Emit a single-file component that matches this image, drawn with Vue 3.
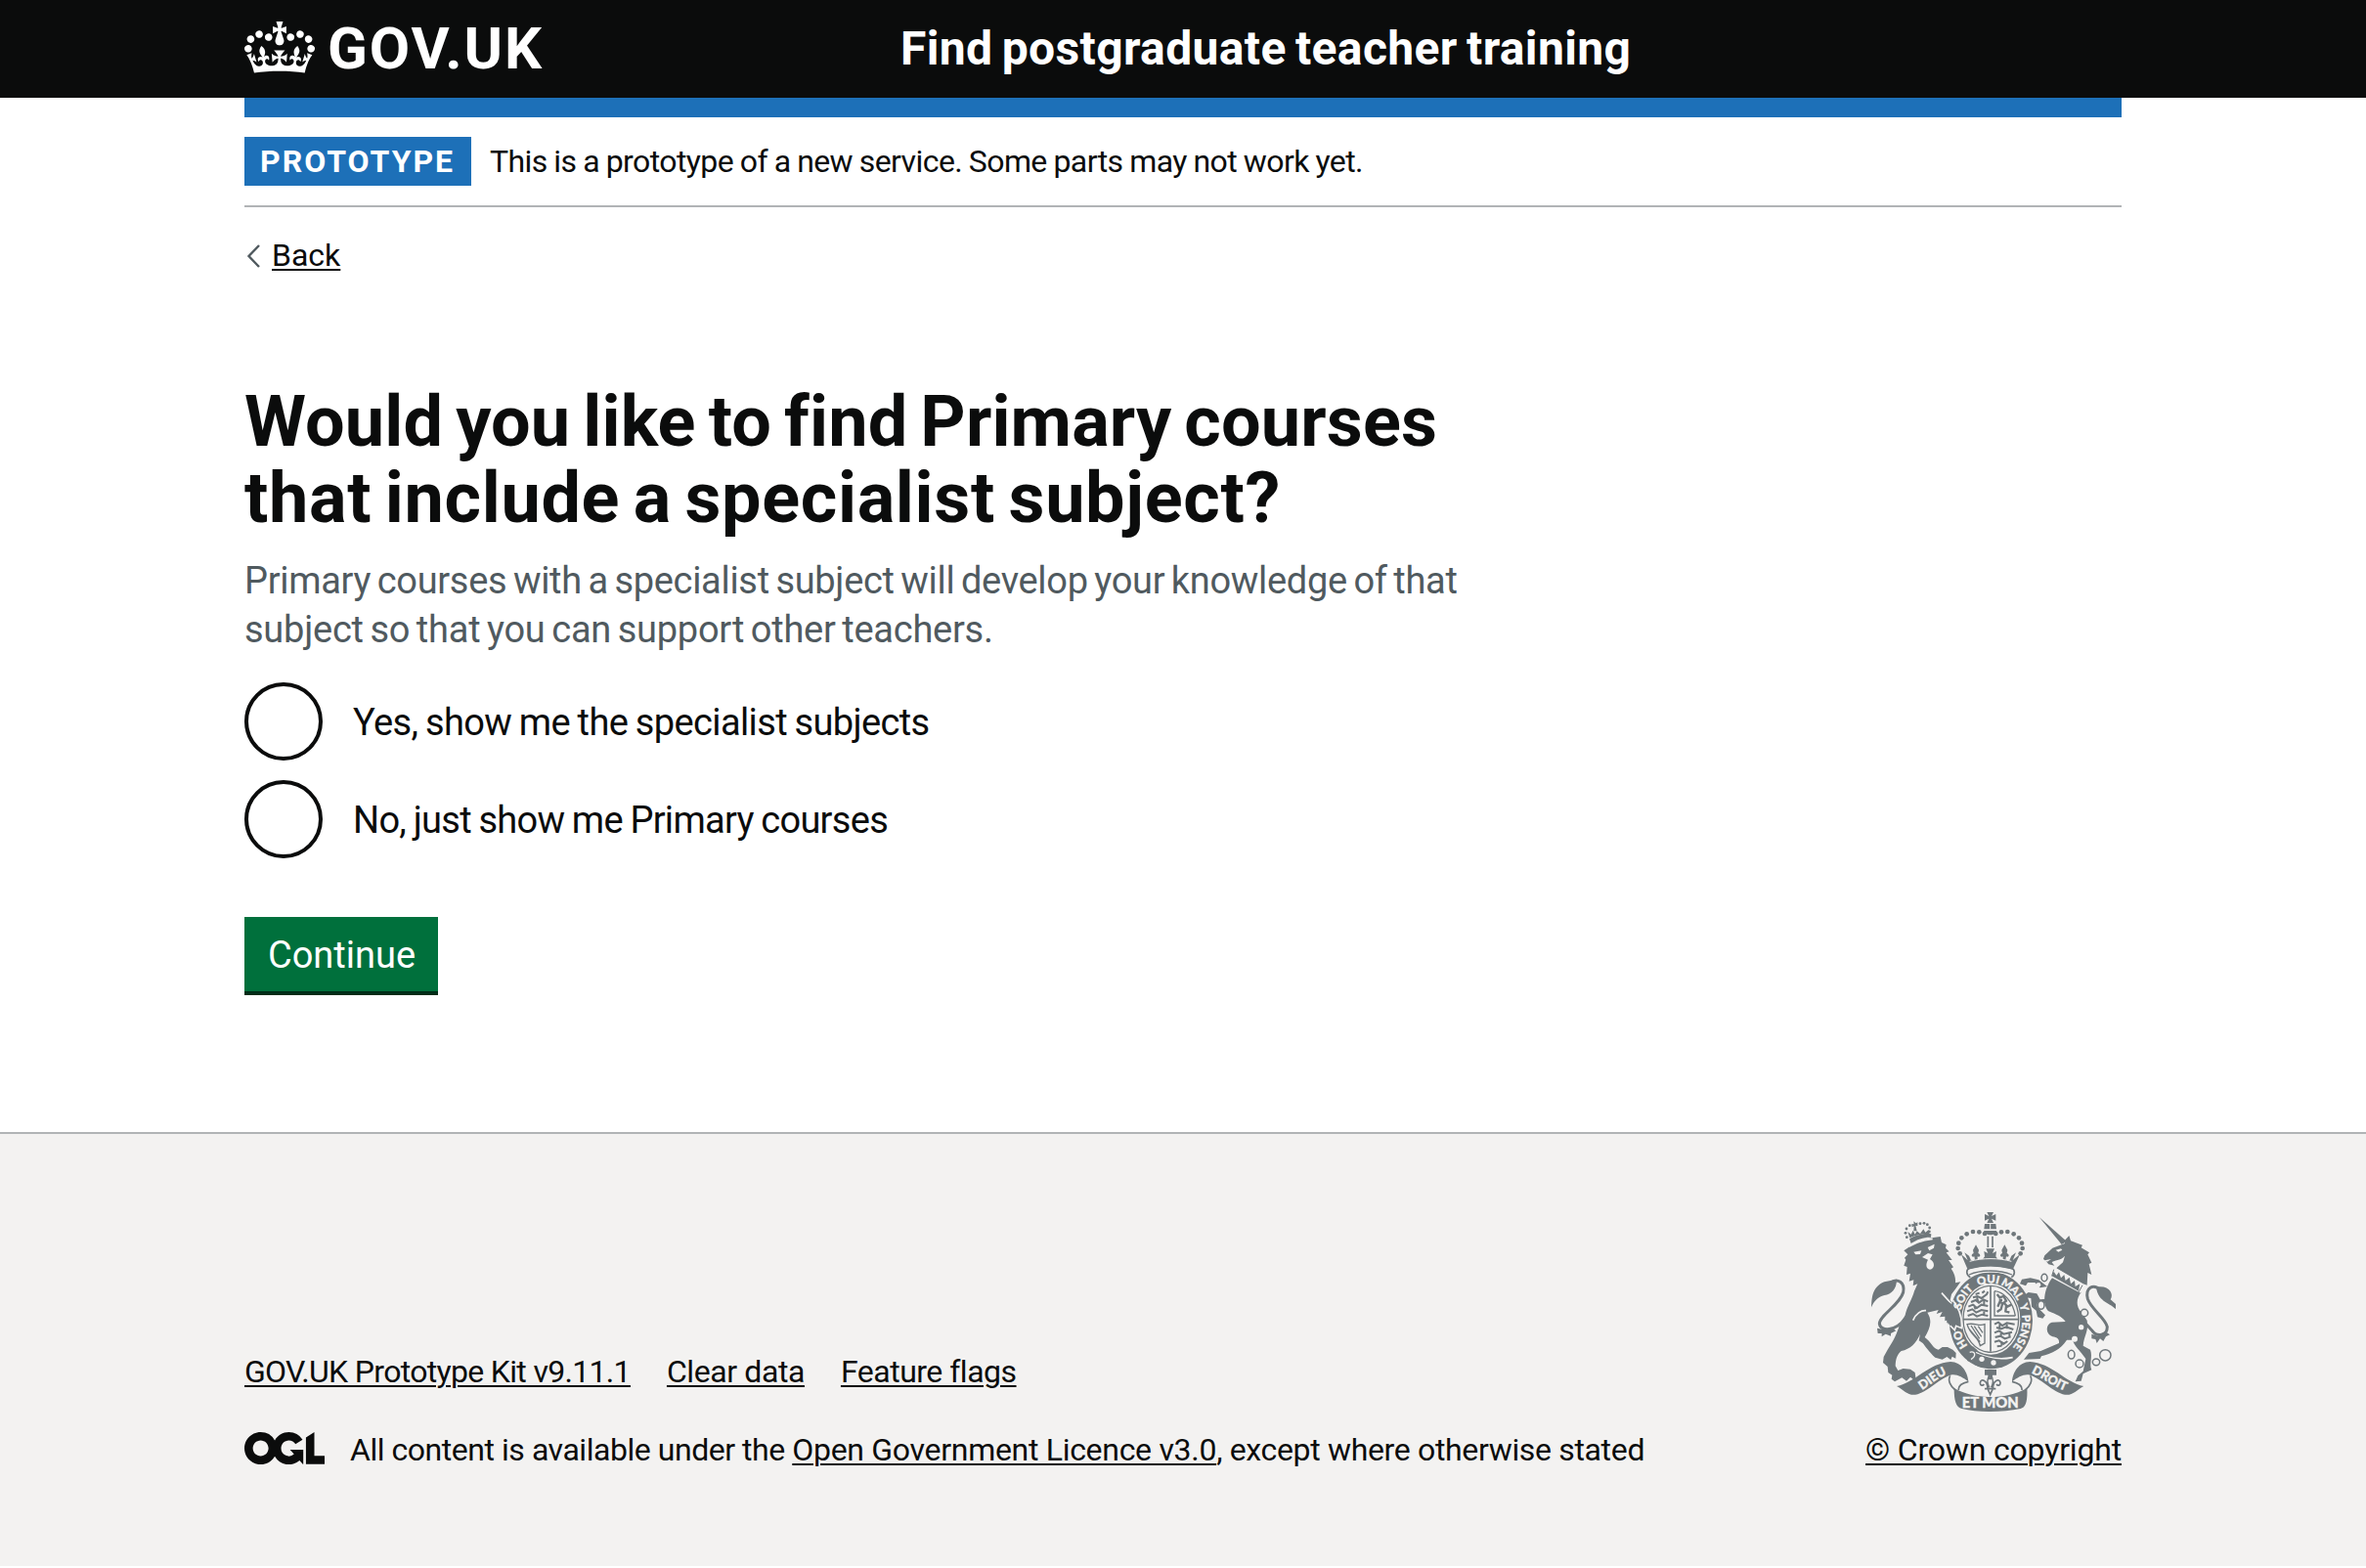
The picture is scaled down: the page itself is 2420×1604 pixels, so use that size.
<script setup>
const options = [
  { id: 'yes', label: 'Yes, show me the specialist subjects' },
  { id: 'no', label: 'No, just show me Primary courses' },
]
const footerLinks = [
  { id: 'kit', label: 'GOV.UK Prototype Kit v9.11.1' },
  { id: 'clear', label: 'Clear data' },
  { id: 'flags', label: 'Feature flags' },
]
const crownBeads = [[420, 126], [403, 121], [384, 120], [365, 127], [349, 139], [340, 155], [338, 171], [344, 187]]
const lionBeads = [[190, 101], [180, 111], [177, 124], [181, 137], [222, 95], [234, 94], [244, 98], [251, 108], [250, 120]]
</script>

<template>
  <header class="header">
    <div class="container header-row">
      <a class="logo">
        <svg class="crown" viewBox="0 0 132 97" aria-hidden="true">
          <path fill="currentColor" d="M25 30.2c3.5 1.5 7.7-.2 9.1-3.7 1.5-3.6-.2-7.8-3.9-9.2-3.6-1.4-7.6.3-9.1 3.9-1.4 3.5.3 7.5 3.9 9zM9 39.5c3.6 1.5 7.8-.2 9.2-3.7 1.5-3.6-.2-7.8-3.9-9.1-3.6-1.5-7.6.2-9.1 3.8-1.4 3.5.3 7.5 3.8 9zM4.4 57.2c3.5 1.5 7.7-.2 9.1-3.8 1.5-3.6-.2-7.7-3.9-9.1-3.5-1.5-7.6.3-9.1 3.8-1.4 3.5.3 7.6 3.9 9.1zm38.3-21.4c3.5 1.5 7.7-.2 9.1-3.8 1.5-3.6-.2-7.7-3.9-9.1-3.6-1.5-7.6.3-9.1 3.8-1.3 3.6.4 7.7 3.9 9.1zm64.4-5.6c-3.6 1.5-7.8-.2-9.1-3.7-1.5-3.6.2-7.8 3.8-9.2 3.6-1.4 7.7.3 9.2 3.9 1.3 3.5-.4 7.5-3.9 9zm15.9 9.3c-3.6 1.5-7.7-.2-9.1-3.7-1.5-3.6.2-7.8 3.7-9.1 3.6-1.5 7.7.2 9.2 3.8 1.5 3.5-.3 7.5-3.8 9zm4.7 17.7c-3.6 1.5-7.8-.2-9.2-3.8-1.5-3.6.2-7.7 3.9-9.1 3.6-1.5 7.7.3 9.2 3.8 1.3 3.5-.4 7.6-3.9 9.1zM89.3 35.8c-3.6 1.5-7.8-.2-9.2-3.8-1.4-3.6.2-7.7 3.9-9.1 3.6-1.5 7.7.3 9.2 3.8 1.4 3.6-.3 7.7-3.9 9.1zM69.7 17.7l8.9 4.7V9.3l-8.9 2.8c-.2-.3-.5-.6-.9-.9L72.4 0H59.6l3.5 11.2c-.3.3-.6.5-.9.9l-8.8-2.8v13.1l8.8-4.7c.3.3.6.7.9.9l-5 15.4v.1c-.2.8-.4 1.6-.4 2.4 0 4.1 3.1 7.5 7 8.1h.2c.3 0 .7.1 1 .1.4 0 .7 0 1-.1h.2c4-.6 7.1-4.1 7.1-8.1 0-.8-.1-1.7-.4-2.4V34l-5.1-15.4c.4-.2.7-.6 1-.9zM66 92.8c16.9 0 32.8 1.1 47.1 3.2 4-16.9 8.9-26.7 14-33.5l-9.6-3.4c1 4.9 1.1 7.2 0 10.2-1.5-1.4-3-4.3-4.2-8.7L108.6 76c2.8-2 5-3.2 7.5-3.3-4.4 9.4-10 11.9-13.6 11.2-4.3-.8-6.3-4.6-5.6-7.9 1-4.7 5.7-5.9 8-.5 4.3-8.7-3-11.4-7.6-8.8 7.1-7.2 7.9-13.5 2.1-21.1-8 6.1-8.1 12.3-4.5 20.8-4.7-5.4-12.1-2.5-9.5 6.2 3.4-5.2 7.9-2 7.2 3.1-.6 4.3-6.4 7.8-13.5 7.2-10.3-.9-10.9-8-11.2-13.8 2.5-.5 7.1 1.8 11 7.3L80.2 60c-4.1 4.4-8 5.3-12.3 5.4 1.4-4.4 8-11.6 8-11.6H55.5s6.4 7.2 7.9 11.6c-4.2-.1-8-1-12.3-5.4l1.4 16.4c3.9-5.5 8.5-7.7 10.9-7.3-.3 5.8-.9 12.8-11.1 13.8-7.2.6-12.9-2.9-13.5-7.2-.7-5 3.8-8.3 7.1-3.1 2.7-8.7-4.6-11.6-9.4-6.2 3.7-8.5 3.6-14.7-4.6-20.8-5.8 7.6-5 13.9 2.2 21.1-4.7-2.6-11.9.1-7.7 8.8 2.3-5.5 7.1-4.2 8.1.5.7 3.3-1.3 7.1-5.7 7.9-3.5.7-9-1.8-13.5-11.2 2.5.1 4.7 1.3 7.5 3.3l-4.7-15.4c-1.2 4.4-2.7 7.2-4.3 8.7-1.1-3-.9-5.3 0-10.2l-9.5 3.4c5 6.9 9.9 16.7 14 33.5 14.8-2.1 30.8-3.2 47.7-3.2z" />
        </svg>
        <span class="logo-text">GOV.UK</span>
      </a>
      <a class="service">Find postgraduate teacher training</a>
    </div>
  </header>

  <div class="container">
    <div class="blue-bar"></div>
    <div class="phase">
      <strong class="tag">PROTOTYPE</strong>
      <span class="phase-text">This is a prototype of a new service. Some parts may not work yet.</span>
    </div>
    <a class="back">
      <svg class="chevron" viewBox="0 0 16 26" aria-hidden="true">
        <path d="M15 2 4.5 13 15 24" fill="none" stroke="#505a5f" stroke-width="2.4" />
      </svg>
      <span class="link">Back</span>
    </a>

    <main class="main">
      <h1 class="title">
        <span class="line title-a">Would you like to find Primary courses</span>
        <span class="line title-b">that include a specialist subject?</span>
      </h1>
      <p class="hint">
        <span class="line">Primary courses with a specialist subject will develop your knowledge of that</span>
        <span class="line hint-b">subject so that you can support other teachers.</span>
      </p>
      <div class="radios">
        <label v-for="o in options" :key="o.id" class="radio" :class="o.id">
          <span class="circle"></span>
          <span class="radio-label">{{ o.label }}</span>
        </label>
      </div>
      <button class="button" type="button">Continue</button>
    </main>
  </div>

  <footer class="footer">
    <div class="container footer-row">
      <div class="meta">
        <nav class="links">
          <a v-for="l in footerLinks" :key="l.id" class="link" :class="l.id">{{ l.label }}</a>
        </nav>
        <div class="licence">
          <svg class="ogl" viewBox="0 0 483.2 195.7" aria-hidden="true">
            <path fill="currentColor" d="M421.5 142.8V.1l-50.7 32.3v161.1h112.4v-50.7zm-122.3-9.6A47.12 47.12 0 0 1 221 97.8c0-26 21.1-47.1 47.1-47.1 16.7 0 31.4 8.7 39.7 21.8l42.7-27.2A97.63 97.63 0 0 0 268.1 0c-36.5 0-68.3 20.1-85.1 49.7A98 98 0 0 0 97.8 0C43.9 0 0 43.9 0 97.8s43.9 97.8 97.8 97.8c36.5 0 68.3-20.1 85.1-49.7a97.76 97.76 0 0 0 149.6 25.4l19.4 22.2h3v-87.8h-80l24.3 27.5zM97.8 145c-26 0-47.1-21.1-47.1-47.1s21.1-47.1 47.1-47.1 47.1 21.1 47.1 47.1S123.8 145 97.8 145" />
          </svg>
          <p class="licence-text"><span class="l1">All content is available under the </span><a class="link l2">Open Government Licence v3.0</a><span class="l3">, except where otherwise stated</span></p>
        </div>
      </div>

      <div class="copyright">
        <svg class="arms" viewBox="72 60 750 612" aria-hidden="true">
          <defs>
            <path id="garter-line" d="M439 507A96 115 0 0 1 439 277A96 115 0 0 1 439 507" />
            <path id="dieu-line" d="M212 614C248 598 272 566 322 551" />
            <path id="droit-line" d="M548 549C592 560 626 598 682 613" />
          </defs>

          <!-- lion -->
          <g class="ink">
            <path d="M194 156 189 142C205 131 235 123 256 127L255 137C235 136 212 143 194 156Z" />
            <path d="M190 139 184 120 194 128 200 116 206 128 212 118 222 126 232 112 238 122 248 114 250 127C230 126 208 130 190 139Z" />
            <path d="M202 88 209 94 214 91 214 103 208 101 212 118 202 118 203 103 197 106 196 96 203 97Z" />
            <circle v-for="([x, y], i) in lionBeads" :key="i" :cx="x" :cy="y" r="4.2" />
            <path d="M172 178 190 166C215 148 245 140 284 135L288 153 302 160 300 170 311 181 302 184 320 207 309 207 324 229 317 233C329 250 331 264 330 277L346 274 330 296 318 312 314 330 344 372 346 412 330 404 330 417 318 402 308 404 310 390 298 394 298 380 282 382 290 366 272 372 278 360 244 368C262 395 250 420 236 444 254 456 262 480 278 482L290 474 306 474 322 482 332 492 331 509 320 503 316 513 304 504 290 512 268 506C250 490 238 472 230 462L218 454 222 434C210 462 192 480 164 486 152 495 146 512 146 532L154 546 170 540 192 542 206 552 208 566 204 576 192 566 180 578 166 568 144 580 134 572 136 560 124 552 122 534 108 522 110 504 122 482C142 452 150 434 158 408L176 376C180 352 198 326 204 302L214 280 200 286 202 268 188 272 192 248 180 252 182 228 172 224 178 206 174 200 184 190Z" />
            <path d="M72 352C74 328 72 290 112 274L150 266C150 296 134 312 112 315 92 320 80 334 72 352Z" />
            <path d="M90 416 108 420 136 416 148 424 132 432 132 440 116 434 104 442 104 432 92 432Z" />
          </g>
          <path class="stroke" stroke-width="9" d="M132 276C152 262 176 274 170 306 160 344 98 376 97 402 100 428 148 426 176 386" />
          <path class="paper" d="M202 182 226 178 222 189 208 190ZM245 168 266 158 264 170 250 178ZM228 198 246 186 260 190 252 204C270 215 266 234 252 236 240 234 238 220 246 206Z" />
          <path class="gap" stroke-width="5" d="M288 308 340 366M188 165C215 150 240 143 260 142M240 362C226 360 208 372 200 392" />

          <!-- unicorn -->
          <g class="ink">
            <path d="M587 75 672 150 656 159Z" />
            <path d="M600 204 604 193 628 170 666 156 666 146 679 132 684 148 720 161 716 169 741 184 736 190 748 215 740 219 748 252 736 246 734 284 722 280 640 232 660 214 666 194C652 210 634 206 626 214L634 224 616 220 608 210Z" />
            <path d="M628 260 716 306C700 326 700 350 716 366L734 392C740 426 724 440 722 470L744 482C752 504 740 524 748 544L722 556 716 578 698 580 706 562 722 548 730 510C714 486 694 470 690 452L672 452C652 482 626 494 594 502L590 510 540 512 556 492 592 486 648 462C650 450 642 444 628 442 606 434 606 404 626 398L668 396C656 380 640 374 616 364 598 346 598 300 628 260Z" />
            <path d="M612 288 590 292 574 276 552 276 546 286 528 280 534 266 560 262 586 268 604 282ZM610 326 590 328 580 310 554 306 540 316 546 322 562 324 564 350 578 362 582 382 598 386 606 376 588 358 584 336 612 350Z" />
            <path d="M762 290C800 282 818 310 806 328L822 342 822 358C810 340 768 338 762 290ZM748 434 766 440 790 426 804 436 792 442 784 456 774 448 764 462 760 450 748 448Z" />
          </g>
          <path class="stroke" stroke-width="9" d="M776 300C752 276 728 294 736 326 746 358 792 386 796 412 796 440 764 444 750 424L732 404" />
          <path class="paper" d="M638 176 654 172 658 176 646 182ZM604 208 624 204 612 212ZM632 228 722 282 714 308 624 260Z" />
          <path class="ink" d="M626 256 632 242 640 254 648 244 654 262 664 252 668 270 680 260 684 280 696 270 698 288 712 280 708 302Z" />
          <path class="stroke" stroke-width="3" d="M632 236 626 256M720 284 708 306" />
          <circle class="paper" cx="593" cy="345" r="12" />
          <circle class="paper" cx="726" cy="369" r="11" />
          <g class="chain">
            <ellipse cx="603" cy="261" rx="9" ry="11" />
            <ellipse cx="593" cy="345" rx="10" ry="13" />
            <circle cx="726" cy="369" r="11" />
            <ellipse cx="686" cy="497" rx="10" ry="13" />
            <circle cx="711" cy="525" r="12" />
            <ellipse cx="762" cy="520" rx="11" ry="10" />
            <circle cx="790" cy="499" r="17" />
          </g>
          <g class="paper">
            <circle cx="585" cy="283" r="7" />
            <circle cx="716" cy="413" r="8" />
            <circle cx="696" cy="449" r="9" />
          </g>

          <!-- garter and shield -->
          <ellipse class="ink" cx="439" cy="392" rx="128" ry="149" />
          <ellipse class="paper" cx="439" cy="388" rx="90" ry="109" />
          <ellipse class="stroke" stroke-width="4" cx="439" cy="388" rx="85" ry="102" />
          <path class="stroke" stroke-width="5" d="M438 288V488M354 389H524" />
          <g class="stroke" stroke-width="6">
            <path d="M392 312 404 308M384 322 398 318 410 324 426 312 430 304M412 308 420 302M378 336 392 330 402 338 416 328 430 334M396 322 400 334M370 350 384 344 396 354 410 344 430 348M386 344 392 358M366 364 382 358 394 368 410 360 430 364M368 378 384 372 396 380 412 374 430 378M418 328V344M418 360V374" />
            <path d="M450 404 462 398 474 408 488 400 512 404M456 414 470 418 486 412 508 420M450 430 464 424 478 434 504 428M452 444 468 440 482 448 500 442M450 458 464 454 478 464 490 456M458 472 472 470M466 404V416M488 404V418M470 432V444M496 428V444M472 456V470" />
            <path d="M450 302V378H514M450 302C475 304 506 330 514 378" stroke-width="4" />
            <path d="M458 312 466 322 478 318 486 332 476 340 466 336 460 350M478 338 490 350 502 344M474 342 470 358 458 366M486 348 484 364 496 368M464 330 474 330" stroke-width="7" />
            <path d="M366 404C390 398 402 412 420 404V462L406 470C400 440 376 440 366 404ZM378 408 404 448M388 410 410 442M400 410 414 430M372 418 406 458" stroke-width="4" />
          </g>
          <g class="motto">
            <text class="garter-text"><textPath href="#garter-line" startOffset="16.5%">HO</textPath></text>
            <text class="garter-text"><textPath href="#garter-line" startOffset="35.5%">SOIT</textPath></text>
            <text class="garter-text"><textPath href="#garter-line" startOffset="48.8%">QUI</textPath></text>
            <text class="garter-text"><textPath href="#garter-line" startOffset="60%">MAL</textPath></text>
            <text class="garter-text"><textPath href="#garter-line" startOffset="69.3%">Y</textPath></text>
            <text class="garter-text"><textPath href="#garter-line" startOffset="80.5%">PENSE</textPath></text>
          </g>
          <path class="ink" d="M300 330 322 344 344 384 346 410 330 404 326 416 314 402 304 400Z" />
          <path class="gap" stroke-width="5" d="M322 330C338 350 352 376 349 416L332 409 328 422 314 408M376 482C420 508 466 514 506 506" />
          <path class="ink" d="M368 478 384 472 398 484 392 492C430 508 470 516 504 512 480 534 440 544 400 534L380 520 366 516 372 504 364 494Z" />
          <path class="gap" stroke-width="4" d="M374 490C390 484 396 500 378 512" />
          <circle class="paper" cx="411" cy="511" r="8" />
          <circle class="paper" cx="447" cy="522" r="8" />

          <!-- royal crown -->
          <path class="paper" d="M362 236H514V262C480 240 400 240 362 262Z" />
          <path class="stroke" stroke-width="5" d="M376 260C362 252 362 236 374 232 415 222 462 222 502 232 514 236 514 252 502 260" />
          <path class="stroke" stroke-width="4" d="M372 252C410 236 464 236 504 252" />
          <g class="ink">
            <path d="M427 60H447L441 72 454 66V86L441 80 447 93H427L433 80 420 86V66L433 72Z" />
            <path d="M420 96H454L456 112H418ZM417 117H457C454 134 420 134 417 117Z" />
            <path d="M348 190C356 196 362 202 368 208L358 184 372 194 378 208 390 206 388 196C380 200 376 190 386 186L384 176 393 160 402 176 400 186C410 190 406 200 398 196L398 204 414 204 420 196 418 180 430 186 424 172H450L444 186 456 180 454 196 460 204 476 204 476 196C468 200 464 190 474 186L472 176 481 160 490 176 488 186C498 190 494 200 486 196L484 206 496 208 502 194 516 184 506 208C512 202 520 196 528 190L506 236C465 222 412 222 368 236Z" />
            <g v-for="([x, y], i) in crownBeads" :key="i">
              <circle :cx="x" :cy="y" r="7" />
              <circle :cx="874 - x" :cy="y" r="7" />
            </g>
          </g>
          <path class="stroke" stroke-width="5" d="M430 134V168M444 134V168" />
          <path class="gap" stroke-width="3" d="M437 96V112M374 211C412 200 464 200 502 211" />

          <!-- badge -->
          <path class="ink" d="M420 543H456V560H444L442 574H432L430 560H420Z" />
          <path class="stroke" stroke-width="5" d="M437 558C424 574 428 586 434 598M437 558C450 574 446 586 440 598M428 600C432 580 408 566 406 584 406 592 414 594 418 588M446 600C442 580 466 566 468 584 468 592 460 594 456 588M420 602H454M430 604 437 620 444 604" />

          <!-- ribbon -->
          <g class="ink">
            <path d="M150 594C205 584 250 522 315 519 350 520 368 552 370 580 352 566 332 555 315 560 276 572 232 626 195 620 176 616 166 602 150 594Z" />
            <path d="M724 594C669 584 624 522 559 519 524 520 506 552 504 580 522 566 542 555 559 560 598 572 642 626 679 620 698 616 708 602 724 594Z" />
            <path d="M326 600C362 620 400 627 438 627 476 627 514 620 550 600 552 640 546 660 530 663 472 675 402 675 350 663 332 658 326 640 326 600Z" />
          </g>
          <path class="stroke" stroke-width="5" d="M314 562C306 576 314 594 330 606M370 580C352 584 338 592 340 606M560 562C568 576 560 594 544 606M504 580C522 584 536 592 534 606" />
          <g class="motto">
            <text class="ribbon-text"><textPath href="#dieu-line" startOffset="50%">DIEU</textPath></text>
            <text class="ribbon-text"><textPath href="#droit-line" startOffset="50%">DROIT</textPath></text>
            <text class="mon-text" x="437" y="661" textLength="174" lengthAdjust="spacingAndGlyphs">ET MON</text>
          </g>
        </svg>
        <a class="link">© Crown copyright</a>
      </div>
    </div>
  </footer>
</template>

<style>
body {
  background: #fff;
}
</style>

<style scoped>
.header,
.container,
.footer {
  font-family: Roboto, "Liberation Sans", sans-serif;
  color: #0b0c0c;
  box-sizing: border-box;
}
.container {
  width: 1920px;
  margin: 0 auto;
}
.header {
  background: #0b0c0c;
  height: 100px;
}
.header-row {
  display: flex;
  align-items: center;
  height: 100px;
  color: #fff;
}
.logo {
  display: flex;
  align-items: center;
  width: 671px;
}
.crown {
  width: 72px;
  height: 53px;
  margin: 0 13px 4px 0;
}
.logo-text {
  font-size: 60px;
  line-height: 100px;
  font-weight: 700;
  letter-spacing: 1.9px;
}
.service {
  font-size: 48px;
  line-height: 100px;
  font-weight: 700;
  letter-spacing: 0.36px;
  word-spacing: -3px;
}
.blue-bar {
  height: 20px;
  background: #1d70b8;
}
.phase {
  display: flex;
  align-items: center;
  gap: 19px;
  padding: 20px 0;
  border-bottom: 2px solid #b1b4b6;
  font-size: 32px;
  line-height: 50px;
}
.tag {
  box-sizing: border-box;
  width: 232px;
  padding-left: 16px;
  background: #1d70b8;
  color: #fff;
  letter-spacing: 2px;
}
.phase-text {
  letter-spacing: -0.58px;
  word-spacing: -0.7px;
}
.back {
  display: flex;
  align-items: center;
  width: fit-content;
  margin-top: 29px;
  font-size: 32px;
  line-height: 40px;
}
.chevron {
  width: 16px;
  height: 26px;
  margin: 2px 12px 0 0;
}
.link {
  text-decoration: underline;
  text-decoration-thickness: 2px;
  text-underline-offset: 3px;
}
.main {
  padding-top: 112px;
}
.line {
  display: block;
  white-space: nowrap;
}
.title {
  margin: 0;
  font-size: 72px;
  line-height: 78px;
  font-weight: 700;
}
.title-a {
  letter-spacing: 0.14px;
  word-spacing: -5px;
}
.title-b {
  letter-spacing: 0.66px;
  word-spacing: -5px;
}
.hint {
  margin: 20px 0 29px;
  font-size: 38px;
  line-height: 50px;
  letter-spacing: -0.31px;
  word-spacing: -2.5px;
  color: #505a5f;
}
.hint-b {
  letter-spacing: -0.25px;
}
.radios {
  display: flex;
  flex-direction: column;
  gap: 20px;
}
.radio {
  display: flex;
  align-items: center;
  gap: 31px;
  height: 80px;
  font-size: 38px;
}
.radio-label {
  padding-top: 2px;
}
.radio.yes {
  letter-spacing: -0.63px;
  word-spacing: -1.2px;
}
.radio.no {
  letter-spacing: -0.71px;
  word-spacing: -1.2px;
}
.circle {
  box-sizing: border-box;
  width: 80px;
  height: 80px;
  border: 4px solid #0b0c0c;
  border-radius: 50%;
}
.button {
  display: block;
  width: 198px;
  height: 76px;
  margin: 60px 0 144px;
  padding: 2px 0 0 1px;
  border: 0;
  background: #00703c;
  box-shadow: 0 4px 0 #002d18;
  color: #fff;
  font: 400 38px/74px Roboto, "Liberation Sans", sans-serif;
  text-align: center;
}
.footer {
  height: 444px;
  border-top: 2px solid #b1b4b6;
  background: #f3f2f1;
}
.footer-row {
  display: flex;
  justify-content: space-between;
  align-items: flex-end;
  height: 442px;
  padding-bottom: 99px;
  font-size: 32px;
  line-height: 40px;
}
.links {
  display: flex;
  gap: 37px;
  margin-bottom: 40px;
}
.kit {
  letter-spacing: -0.68px;
}
.clear {
  letter-spacing: -0.41px;
}
.flags {
  letter-spacing: -0.5px;
}
.licence {
  display: flex;
  align-items: flex-start;
  gap: 26px;
}
.ogl {
  width: 82px;
  height: 33.2px;
  margin-top: 1.5px;
}
.licence-text {
  margin: 0;
  white-space: pre;
}
.l1 {
  letter-spacing: -0.46px;
}
.l2 {
  letter-spacing: -0.3px;
}
.l3 {
  letter-spacing: -0.34px;
}
.copyright {
  display: flex;
  flex-direction: column;
  align-items: center;
  gap: 19px;
  letter-spacing: -0.18px;
}
.arms {
  width: 250px;
  height: 204px;
}
.ink {
  fill: #6f777b;
}
.paper {
  fill: #f3f2f1;
}
.stroke,
.chain {
  fill: none;
  stroke: #6f777b;
}
.chain {
  stroke-width: 4.5;
}
.gap {
  fill: none;
  stroke: #f3f2f1;
}
.motto {
  fill: #f3f2f1;
  stroke: #f3f2f1;
  stroke-width: 1;
  font-family: Lato, sans-serif;
  font-weight: 900;
  text-anchor: middle;
  letter-spacing: 0;
}
.garter-text {
  font-size: 34px;
}
.ribbon-text {
  font-size: 38px;
}
.mon-text {
  font-size: 46px;
}
</style>
